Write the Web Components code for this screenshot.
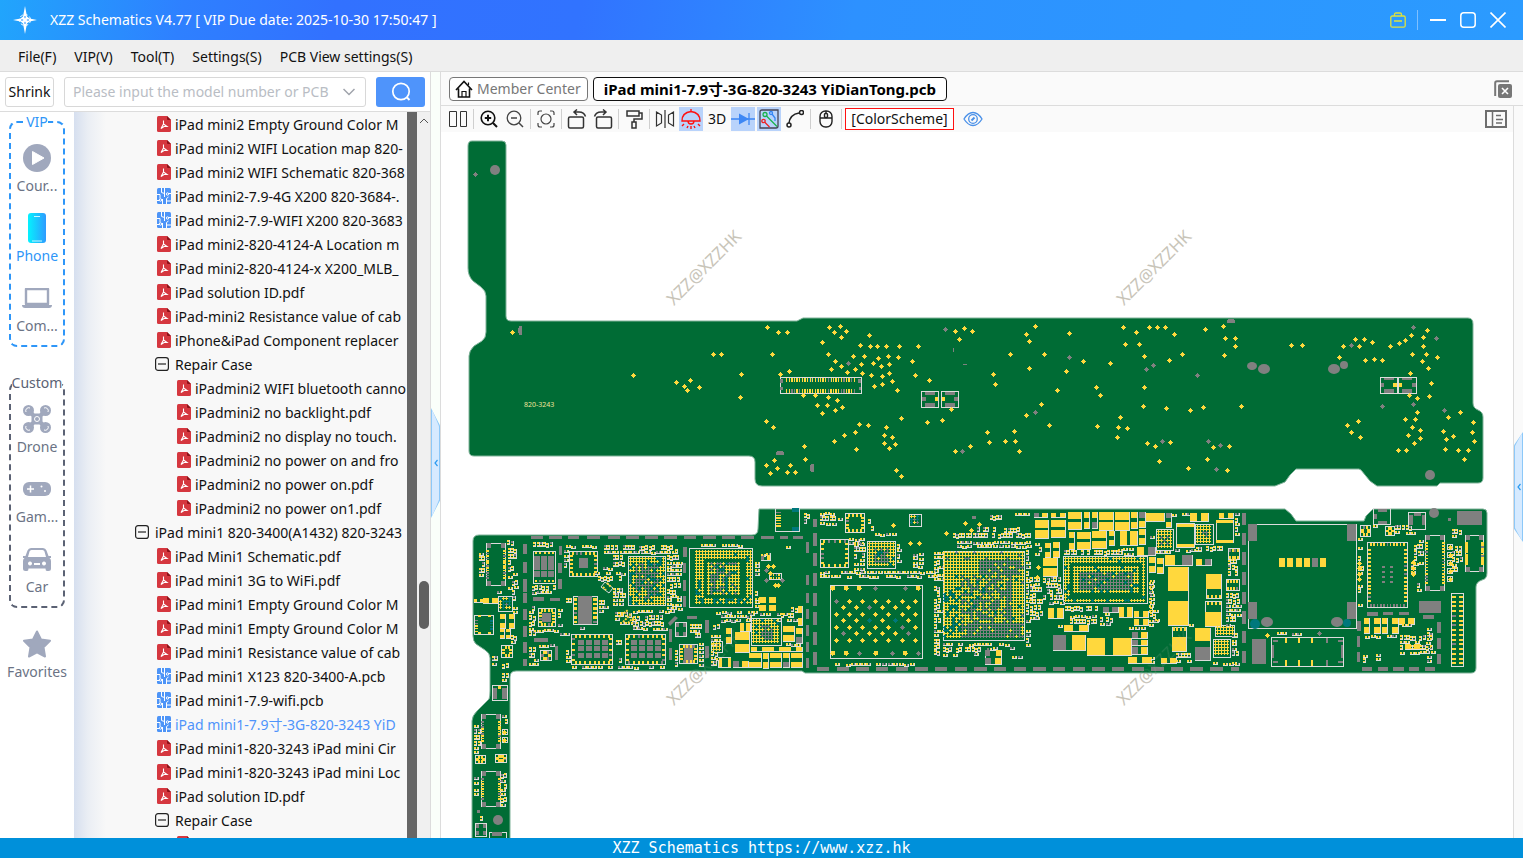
<!DOCTYPE html>
<html lang="en">
<head>
<meta charset="utf-8">
<title>XZZ Schematics</title>
<style>
  html, body { height: 100%; margin: 0; }
  body {
    font: 14px/20px "Noto Sans", "Noto Sans CJK SC", sans-serif;
    color: #111;
    background: #fff;
    overflow: hidden;
  }
</style>
</head>
<body>
<xzz-app></xzz-app>

<script>
const ICONS = {
  logo: ['0 0 24 28', '<path fill="#fff" d="M12 0l2 10.500 2.500 2L24 14l-7.500 1.500-2.500 2L12 28l-2-10.500-2.500-2L0 14l7.500-1.500 2.500-2z"/><circle cx="12" cy="14" r="5.500" fill="none" stroke="#fff" stroke-width="1" stroke-dasharray="3 2"/><path stroke="#2a90fd" d="M8 14h8M12 10v8"/><circle cx="12" cy="14" r="2" fill="#fff"/>'],
  bag: ['0 0 16 16', '<g fill="none" stroke="#dfe23c" stroke-width="1.300"><rect x=".8" y="4" width="14.400" height="11.200" rx="1.500"/><path d="M4.500 4V2.500q0-1.500 1.500-1.500h4q1.500 0 1.500 1.500V4M4 9h8"/></g>'],
  min: ['0 0 16 16', '<path d="M0 8h16" stroke="#fff" stroke-width="2"/>'],
  max: ['0 0 16 16', '<rect x=".8" y=".8" width="14.400" height="14.400" rx="3" fill="none" stroke="#fff" stroke-width="1.500"/>'],
  close: ['0 0 16 16', '<path d="M.5.5l15 15M15.500.5l-15 15" stroke="#fff" stroke-width="1.600"/>'],
  down: ['0 0 12 8', '<path d="M.5 1L6 6.500 11.500 1" fill="none" stroke="#a0a4ac" stroke-width="1.500"/>'],
  search: ['0 0 20 20', '<circle cx="10" cy="9.500" r="8.200" fill="none" stroke="#fff" stroke-width="1.700"/><path d="M15.500 15l3 3" stroke="#fff" stroke-width="2"/>'],
  play: ['0 0 28 28', '<circle cx="14" cy="14" r="14" fill="#a0a8bd"/><path d="M9.500 7.500v13L21 14z" fill="#fff" stroke="#fff" stroke-linejoin="round"/>'],
  phone: ['0 0 18 30', '<defs><linearGradient id="g"><stop stop-color="#05f2fe"/><stop offset="1" stop-color="#2e9bff"/></linearGradient></defs><rect width="18" height="30" rx="3" fill="url(#g)"/><path d="M6 3.500h6M4 28h10" stroke="#c9f8ff" stroke-width="1.200"/>'],
  laptop: ['0 0 30 20', '<path d="M4 1h22v15H4z" fill="none" stroke="#a0a8bd" stroke-width="2.400" stroke-linejoin="round"/><path d="M0 17h30q0 3-3 3H3q-3 0-3-3z" fill="#a0a8bd"/>'],
  drone: ['0 0 28 28', '<g fill="none" stroke="#a0a8bd"><path d="M6 6l16 16M22 6L6 22" stroke-width="4"/><g fill="#a0a8bd" stroke="none"><circle cx="5.500" cy="5.500" r="5.500"/><circle cx="22.500" cy="5.500" r="5.500"/><circle cx="5.500" cy="22.500" r="5.500"/><circle cx="22.500" cy="22.500" r="5.500"/><rect x="8.500" y="8.500" width="11" height="11" rx="4"/></g><g stroke="#fff" stroke-width="1"><path d="M3 7a3 3 0 0 1 4-4M21 3a3 3 0 0 1 4 4M3 21a3 3 0 0 0 4 4M21 25a3 3 0 0 0 4-4"/><circle cx="14" cy="14" r="2.500"/></g></g>'],
  game: ['0 0 28 14', '<rect width="28" height="14" rx="6" fill="#a0a8bd"/><path d="M7.500 3.500v7M4 7h7" stroke="#fff" stroke-width="1.500"/><circle cx="18.500" cy="4.500" r="1" fill="#fff"/><circle cx="22" cy="9" r="1" fill="#fff"/>'],
  car: ['0 0 28 23', '<path fill="#a0a8bd" fill-rule="evenodd" d="M8 0h12q2.500 0 3.500 2.500L25.500 8H28v2h-1.500q1.500 1 1.500 3v7.500q0 2.500-2.500 2.500H24q-1.500 0-1.500-2.500h-17Q5.500 23 4 23H2.500Q0 23 0 20.500V13q0-2 1.500-3H0V8h2.500l2-5.500Q5.500 0 8 0zm.5 2Q7 2 6.500 3.500L5 9h18l-1.500-5.500Q21 2 19.500 2zM7 13.500a2 2 0 1 0 .01 0zm14 0a2 2 0 1 0 .01 0zM11 15v2h6v-2z"/>'],
  star: ['0 0 28 28', '<path d="M14 1.500l4 8 9 1.300-6.500 6.400 1.500 9.300-8-4.200-8 4.200 1.500-9.300L1 10.800l9-1.300z" fill="#a0a8bd" stroke="#a0a8bd" stroke-width="2" stroke-linejoin="round"/>'],
  pdf: ['0 0 14 16', '<path d="M1.500 0H10l4 4v10.500q0 1.500-1.500 1.500h-11Q0 16 0 14.500v-13Q0 0 1.500 0z" fill="#d5373f"/><path d="M10 0l4 4h-3q-1 0-1-1z" fill="#8c1219"/><path d="M6.500 4.500v3.500l3.500 2.500H7L4 12.500 6.500 8" fill="none" stroke="#fff" stroke-width="1.100"/>'],
  pcb: ['0 0 14 16', '<rect width="14" height="16" rx="1.500" fill="#4d94f7"/><g fill="none" stroke="#fff" stroke-width="1"><path d="M4.500 0v4.500l3 1M7.500 0v9M0 6.500h3v4M0 12.500h2M9.500 16v-5.500l2-1.500M5.500 16v-5M11.500 5.500H14M10 13h4"/><circle cx="3.500" cy="12" r="1.200"/><circle cx="10.500" cy="6" r="1.200"/></g>'],
  minus: ['0 0 14 14', '<rect x=".6" y=".6" width="12.800" height="12.800" rx="2.500" fill="none" stroke="#222" stroke-width="1.200"/><path d="M3 7h8" stroke="#222" stroke-width="1.200"/>'],
  home: ['0 0 18 18', '<g fill="none" stroke="#111" stroke-width="1.600"><path d="M1 10l8-8.500 8 8.500M3.500 8.500V17h11V8.500"/><path d="M7 17v-5.500h4V17M13.500 5V2.500" stroke-width="1.200"/></g>'],
  closeall: ['0 0 18 18', '<path d="M1.200 16V3q0-1.800 1.800-1.800h12" fill="none" stroke="#777" stroke-width="2"/><rect x="4" y="4" width="14" height="14" rx="2" fill="#777"/><path d="M8 8l6 6M14 8l-6 6" stroke="#fff" stroke-width="1.600"/>'],
  panel: ['0 0 22 18', '<g fill="none" stroke="#6e6e6e"><rect x="1" y="1" width="20" height="16" stroke-width="2"/><path d="M7.500 1v16" stroke-width="1.500"/><path d="M11 5.500h5M11 9.500h7M11 13h6" stroke-width="1.300"/></g>'],
  split: ['0 0 20 18', '<path d="M1.500 1.500h7v15h-7zM12.500 1.500h6v15h-6z" fill="none" stroke="#333"/>'],
  zoomin: ['0 0 18 18', '<circle cx="8" cy="8" r="6.800" fill="none" stroke="#111" stroke-width="1.600"/><path d="M13 13l4 4M8 4.800v6.400M4.800 8h6.400" stroke="#111" stroke-width="2"/>'],
  zoomout: ['0 0 18 18', '<circle cx="8" cy="8" r="6.800" fill="none" stroke="#444" stroke-width="1.300"/><path d="M13 13l4 4M5 8h6" stroke="#444" stroke-width="1.500"/>'],
  fit: ['0 0 18 18', '<g fill="none" stroke="#444" stroke-width="1.200"><path d="M1 5V3q0-2 2-2h2M13 1h2q2 0 2 2v2M17 13v2q0 2-2 2h-2M5 17H3q-2 0-2-2v-2"/><circle cx="9" cy="9" r="5"/></g>'],
  rotl: ['0 0 20 20', '<g fill="none" stroke="#333" stroke-width="1.500"><rect x="1.500" y="8" width="15" height="11" rx="1.500"/><path d="M7 3h5q5 0 6.500 4.500M10 .5L7 3l3 3"/></g>'],
  rotr: ['0 0 20 20', '<g fill="none" stroke="#333" stroke-width="1.500"><rect x="3.500" y="8" width="15" height="11" rx="1.500"/><path d="M13 3H8Q3 3 1.500 7.500M10 .5L13 3l-3 3"/></g>'],
  roller: ['0 0 18 20', '<g fill="none" stroke="#333" stroke-width="1.500"><path d="M2 2h12v5H2zM14 4h3v6H9v3M7 13h4v6H7z"/></g>'],
  mirror: ['0 0 20 18', '<path d="M1.500 2l5 3v8l-5 3zM18.500 2l-5 3v8l5 3zM10 0v18" fill="none" stroke="#333" stroke-width="1.200"/>'],
  lamp: ['0 0 20 20', '<g fill="none" stroke="#f11" stroke-width="1.400"><path d="M1 12q0-8.500 9-9.500 9 1 9 9.500zM7 12q0 3 3 3t3-3M10 0v3M3 15l-2 2M7 17l-1 2M13 17l1 2M17 15l2 2M10 17v3"/></g>'],
  diode: ['0 0 24 18', '<path d="M0 9h24M18 3v12" stroke="#3d87f5" stroke-width="1.300"/><path d="M8 3.500v11L18 9z" fill="#3d87f5"/>'],
  probe: ['0 0 20 20', '<g fill="none" stroke-width="1.300"><path d="M1 3q0-2 2-2h16v16q0 2-2 2H1z" stroke="#445"/><path d="M7.500 7L18 17.500" stroke="#19b34a"/><circle cx="6" cy="5.500" r="2" stroke="#19b34a"/><path d="M5.500 13l5 5" stroke="#e22"/><circle cx="4.500" cy="12" r="1.700" stroke="#e22"/><path d="M13 5l3 4v3" stroke="#3486f5"/><circle cx="12" cy="4" r="1.500" stroke="#3486f5"/></g>'],
  curve: ['0 0 18 18', '<g fill="none" stroke="#222" stroke-width="1.500"><path d="M3 13q1-8.500 10-10"/><circle cx="3" cy="15" r="2"/><circle cx="15.500" cy="2.500" r="2"/></g>'],
  mouse: ['0 0 14 18', '<g fill="none" stroke="#222" stroke-width="1.400"><rect x="1" y="1" width="12" height="16" rx="5.500"/><path d="M1 8h12M7 1v3"/><rect x="5.500" y="3.500" width="3" height="4" rx="1"/></g>'],
  eye: ['0 0 20 16', '<g fill="none" stroke="#4a90e8" stroke-width="1.300"><path d="M1 8q4-6.500 9-6.500T19 8q-4 6.500-9 6.500T1 8z"/><circle cx="10" cy="8" r="4.300"/><path d="M8.500 9.500l3-3" stroke-width="2"/></g>'],
  left: ['0 0 4 8', '<path d="M3.500 1L1 4l2.500 3" fill="none" stroke="#2d9bf0" stroke-width="1.200"/>'],
};

class AppIcon extends HTMLElement {
  constructor() {
    super();
    this.attachShadow({ mode: 'open' });
  }

  connectedCallback() {
    const [box, body] = ICONS[this.getAttribute('name')];
    const [, , w, h] = box.split(' ');
    this.shadowRoot.innerHTML = `
      <style>:host { display: inline-flex; flex: none; } svg { display: block; }</style>
      <svg viewBox="${box}" width="${w}" height="${h}" aria-hidden="true">${body}</svg>
    `;
  }
}
customElements.define('app-icon', AppIcon);

// Registers an element whose shadow root is only styles and markup.
function component(name, css, html) {
  customElements.define(name, class extends HTMLElement {
    constructor() {
      super();
      this.attachShadow({ mode: 'open' }).innerHTML = `
        <style>
          * { box-sizing: border-box; }
          button, input { font: inherit; color: inherit; margin: 0; }
          button { background: none; border: 0; padding: 0; }
          ${css}
        </style>
        ${html}
      `;
    }
  });
}

component('title-bar', `
  :host {
    display: flex; align-items: center; height: 40px; padding: 0 17px 0 13px;
    box-sizing: border-box; color: #fff;
    background: linear-gradient(100deg, #21a5fc 0, #2e80ff 12%, #3271ff 22%, #3173ff 38%, #2d91ff 56%, #2b9bff 100%);
  }
  h1 { font: inherit; margin: 0 auto 0 13px; }
  .buttons { display: flex; align-items: center; gap: 14px; }
  button { display: flex; }
  i { width: 1px; height: 20px; background: #7fc0ff; margin: 0 -2px 0 -3px; }
`, `
  <app-icon name="logo"></app-icon>
  <h1>XZZ Schematics V4.77 [ VIP Due date: 2025-10-30 17:50:47 ]</h1>
  <div class="buttons">
    <button aria-label="Toolbox"><app-icon name="bag"></app-icon></button>
    <i></i>
    <button aria-label="Minimize"><app-icon name="min"></app-icon></button>
    <button aria-label="Maximize"><app-icon name="max"></app-icon></button>
    <button aria-label="Close"><app-icon name="close"></app-icon></button>
  </div>
`);

component('menu-bar', `
  :host {
    display: flex; align-items: center; gap: 18px; height: 32px; padding: 2px 18px 0;
    box-sizing: border-box; background: #efefef; border-bottom: 1px solid #dcdcdc;
  }
`, `
  <button>File(F)</button>
  <button>VIP(V)</button>
  <button>Tool(T)</button>
  <button>Settings(S)</button>
  <button>PCB View settings(S)</button>
`);

component('search-bar', `
  :host {
    display: flex; align-items: center; height: 40px; padding: 0 5px;
    box-sizing: border-box; border-bottom: 1px solid #dcdcdc; background: #fff;
  }
  .shrink { height: 30px; width: 49px; border: 1px solid #d8d8d8; border-radius: 3px; white-space: nowrap; }
  label { display: flex; align-items: center; flex: 1; min-width: 0; height: 30px; margin: 0 10px; padding: 0 10px 0 8px; border: 1px solid #d8d8d8; border-radius: 3px; }
  input { flex: 1; min-width: 0; border: 0; outline: 0; padding: 0; margin-right: 6px; background: none; }
  input::placeholder { color: #b9bdc4; }
  .go { display: flex; align-items: center; justify-content: center; width: 49px; height: 30px; border-radius: 3px; background: #4f94fb; }
`, `
  <button class="shrink">Shrink</button>
  <label><input aria-label="Model number" placeholder="Please input the model number or PCB"><app-icon name="down"></app-icon></label>
  <button class="go" aria-label="Search"><app-icon name="search"></app-icon></button>
`);

component('nav-group', `
  :host { display: block; margin: 0 9px 26px; color: #5b6274; }
  :host([active]) { color: #2e96f8; }
  fieldset { margin: 0; padding: 0; min-width: 0; border: 2px dashed currentColor; border-radius: 8px; }
  legend { margin: 0 auto; padding: 0; height: 20px; }
  div { display: grid; gap: 15px; margin: 9px 0; }
`, '<fieldset><legend><slot name="title"></slot></legend><div><slot></slot></div></fieldset>');

component('nav-item', `
  :host { display: block; color: #6b7385; }
  :host([active]) { color: #2e96f8; }
  button { display: flex; flex-direction: column; align-items: center; width: 100%; height: 55px; }
  .icon { display: flex; align-items: center; height: 34px; margin-bottom: 1px; }
`, '<button><span class="icon"><slot name="icon"></slot></span><slot></slot></button>');

component('nav-rail', `
  :host { display: flex; flex-direction: column; width: 74px; flex: none; background: #fff; overflow: hidden; }
  nav-group + nav-group { margin-bottom: 19px; }
`, `
  <nav-group active><span slot="title">VIP</span>
    <nav-item><app-icon slot="icon" name="play"></app-icon>Cour...</nav-item>
    <nav-item active><app-icon slot="icon" name="phone"></app-icon>Phone</nav-item>
    <nav-item><app-icon slot="icon" name="laptop"></app-icon>Com...</nav-item>
  </nav-group>
  <nav-group><span slot="title">Custom</span>
    <nav-item><app-icon slot="icon" name="drone"></app-icon>Drone</nav-item>
    <nav-item><app-icon slot="icon" name="game"></app-icon>Gam...</nav-item>
    <nav-item><app-icon slot="icon" name="car"></app-icon>Car</nav-item>
  </nav-group>
  <nav-item><app-icon slot="icon" name="star"></app-icon>Favorites</nav-item>
`);

// [depth, icon, name, active]
const FILES = [
  [1, 'pdf', 'iPad mini2 Empty Ground Color M'],
  [1, 'pdf', 'iPad mini2 WIFI Location map 820-'],
  [1, 'pdf', 'iPad mini2 WIFI Schematic 820-368'],
  [1, 'pcb', 'iPad mini2-7.9-4G X200 820-3684-.'],
  [1, 'pcb', 'iPad mini2-7.9-WIFI X200 820-3683'],
  [1, 'pdf', 'iPad mini2-820-4124-A Location m'],
  [1, 'pdf', 'iPad mini2-820-4124-x X200_MLB_'],
  [1, 'pdf', 'iPad solution ID.pdf'],
  [1, 'pdf', 'iPad-mini2 Resistance value of cab'],
  [1, 'pdf', 'iPhone&iPad Component replacer'],
  [1, 'minus', 'Repair Case'],
  [2, 'pdf', 'iPadmini2 WIFI bluetooth canno'],
  [2, 'pdf', 'iPadmini2 no backlight.pdf'],
  [2, 'pdf', 'iPadmini2 no display no touch.'],
  [2, 'pdf', 'iPadmini2 no power on and fro'],
  [2, 'pdf', 'iPadmini2 no power on.pdf'],
  [2, 'pdf', 'iPadmini2 no power on1.pdf'],
  [0, 'minus', 'iPad mini1 820-3400(A1432) 820-3243'],
  [1, 'pdf', 'iPad Mini1 Schematic.pdf'],
  [1, 'pdf', 'iPad mini1 3G to WiFi.pdf'],
  [1, 'pdf', 'iPad mini1 Empty Ground Color M'],
  [1, 'pdf', 'iPad mini1 Empty Ground Color M'],
  [1, 'pdf', 'iPad mini1 Resistance value of cab'],
  [1, 'pcb', 'iPad mini1 X123 820-3400-A.pcb'],
  [1, 'pcb', 'iPad mini1-7.9-wifi.pcb'],
  [1, 'pcb', 'iPad mini1-7.9寸-3G-820-3243 YiD', true],
  [1, 'pdf', 'iPad mini1-820-3243 iPad mini Cir'],
  [1, 'pdf', 'iPad mini1-820-3243 iPad mini Loc'],
  [1, 'pdf', 'iPad solution ID.pdf'],
  [1, 'minus', 'Repair Case'],
  [2, 'pdf', ''],
];

component('file-tree', `
  :host { display: flex; flex: 1; min-width: 0; background: linear-gradient(90deg, #d6dfef 0, #eaeef4 14px, #f8f8f8 32px); }
  ul { flex: 1; min-width: 0; margin: 0; padding: 0 0 0 61px; list-style: none; overflow: hidden; }
  li { display: grid; grid-template-columns: 16px 1fr; gap: 4px; align-items: center; height: 24px; margin-left: calc(20px * var(--depth)); white-space: nowrap; }
  li app-icon { justify-self: end; }
  li app-icon[name=minus] { justify-self: start; }
  li span { overflow: hidden; padding-top: 1px; }
  .active { color: #4f94fb; }
  .bar { width: 10px; background: #666; margin-left: 1px; }
  .scroll { width: 13px; background: #f0f0f0; display: flex; flex-direction: column; align-items: center; }
  .scroll svg { margin: 5px 0 456px; }
  .thumb { width: 10px; height: 48px; border-radius: 5px; background: #606060; }
`, `
  <ul>${FILES.map(([depth, icon, name, active]) => `
    <li style="--depth:${depth}"${active ? ' class="active"' : ''}><app-icon name="${icon}"></app-icon><span>${name.replace('&', '&amp;')}</span></li>`).join('')}
  </ul>
  <div class="bar"></div>
  <div class="scroll">
    <svg width="10" height="8"><path d="M1 6l4-4 4 4" fill="none" stroke="#555"/></svg>
    <div class="thumb"></div>
  </div>
`);

component('tab-bar', `
  :host { display: flex; align-items: center; gap: 5px; height: 34px; padding: 0 11px 0 8px; box-sizing: border-box; border-bottom: 1px solid #dcdcdc; background: #fafafa; }
  button { display: flex; align-items: center; gap: 4px; height: 24px; padding: 0 6px 0 5px; border: 1px solid #777; border-radius: 4px; color: #777; background: #fff; white-space: nowrap; }
  .active { padding: 0 10px; border-color: #111; color: #000; font-size: 15px; font-weight: 700; }
  .all { margin-left: auto; border: 0; padding: 0; background: none; }
`, `
  <button><app-icon name="home"></app-icon>Member Center</button>
  <button class="active">iPad mini1-7.9寸-3G-820-3243 YiDianTong.pcb</button>
  <button class="all" aria-label="Close all"><app-icon name="closeall"></app-icon></button>
`);

const tool = (name, on) => `<button aria-label="${name}"${on ? ' class="on"' : ''}><app-icon name="${name}"></app-icon></button>`;

component('tool-bar', `
  :host { display: flex; align-items: center; gap: 2px; height: 26px; padding: 0 5px; box-sizing: border-box; background: #fafafa; }
  button { display: flex; align-items: center; justify-content: center; width: 24px; height: 24px; }
  .on { background: #b9d3fb; }
  i { width: 1px; height: 20px; margin: 0 1px; background: #cfcfcf; }
  .scheme { width: 109px; height: 22px; margin-right: 5px; border: 1px solid #f11; background: #fff; }
  .panel { margin-left: auto; }
`, `
  ${tool('split')}<i></i>${tool('zoomin')}${tool('zoomout')}<i></i>${tool('fit')}<i></i>
  ${tool('rotl')}${tool('rotr')}<i></i>${tool('roller')}<i></i>${tool('mirror')}${tool('lamp', true)}
  <button>3D</button>${tool('diode', true)}${tool('probe', true)}${tool('curve')}<i></i>
  ${tool('mouse')}<i></i><button class="scheme">[ColorScheme]</button>${tool('eye')}
  <button class="panel" aria-label="Panel"><app-icon name="panel"></app-icon></button>
`);

component('side-handle', `
  :host { display: flex; flex: none; flex-direction: column; width: 10px; box-sizing: border-box; background: #fafffa; border: solid #dcdcdc; border-width: 0 1px; }
  button { display: flex; align-items: center; justify-content: center; height: 110px; background: #8cc8f8; clip-path: polygon(0 0, 100% 16%, 100% 84%, 0 100%); position: relative; }
  button::before { content: ""; position: absolute; inset: 1px; background: #d6eaff; clip-path: inherit; }
  app-icon { position: relative; }
  :host([right]) button { clip-path: polygon(100% 0, 0 12%, 0 88%, 100% 100%); }
`, '<button aria-label="Toggle panel"><app-icon name="left"></app-icon></button>');

component('status-bar', `
  :host { display: block; height: 20px; background: #0090da; color: #fff; text-align: center; font: 15px/20px "DejaVu Sans Mono", monospace; }
`, 'XZZ Schematics https://www.xzz.hk');

const GREEN = '#006c35';
const OUTLINE = '#dcdcdc';
const GRAY = '#808080';
const GOLD = '#ffd83d';
const TEAL = '#00787c';

// Collects rectangles by layer and colour. Part coordinates are thirds of a
// pixel from the origin of a tile, snapped to whole pixels.
class Board {
  constructor() {
    this.layers = [OUTLINE, GREEN, GRAY, GOLD, TEAL].map((color) => ({ color, d: '' }));
    this.seed = 7;
    this.tile(0, 0);
  }

  tile(x, y) {
    this.ox = x;
    this.oy = y;
  }

  random() {
    this.seed = (this.seed * 16807) % 2147483647;
    return this.seed / 2147483647;
  }

  px(x, y, w, h, color) {
    if (w > 0 && h > 0) {
      this.layers.find((l) => l.color === color).d += `M${x} ${y}h${w}v${h}h${-w}z`;
    }
  }

  snap(x, y, w, h) {
    const x1 = this.ox + Math.round(x / 3);
    const y1 = this.oy + Math.round(y / 3);
    return [x1, y1, Math.max(1, this.ox + Math.round((x + w) / 3) - x1), Math.max(1, this.oy + Math.round((y + h) / 3) - y1)];
  }

  rect(x, y, w, h, color = GRAY) {
    this.px(...this.snap(x, y, w, h), color);
  }

  rects(list, color) {
    list.forEach((r) => this.rect(...r, color));
  }

  box(x, y, w, h) {
    const [a, b, c, d] = this.snap(x, y, w, h);
    this.px(a, b, c, 1, OUTLINE);
    this.px(a, b + d - 1, c, 1, OUTLINE);
    this.px(a, b + 1, 1, d - 2, OUTLINE);
    this.px(a + c - 1, b + 1, 1, d - 2, OUTLINE);
  }

  // Two-pad part; upright when it is taller than wide.
  cap(x, y, w, h, first = GOLD, second = GOLD) {
    const [a, b, c, d] = this.snap(x, y, w, h);
    const tall = d > c;
    const pad = Math.max(1, Math.round((tall ? d : c) * (c > 12 && d > 12 ? 0.42 : 0.37)));
    this.px(a, b + d, c + 1, 1, OUTLINE);
    this.px(a + c, b, 1, d + 1, OUTLINE);
    this.px(a, b, tall ? c : pad, tall ? pad : d, first);
    this.px(tall ? a : a + c - pad, tall ? b + d - pad : b, tall ? c : pad, tall ? pad : d, second);
  }

  caps(list) {
    list.forEach((c) => this.cap(...c));
  }

  // Fills a region with small passives.
  scatter(x, y, w, h, fill = 0.85) {
    const [a, b, c, d] = this.snap(x, y, w, h);
    const color = () => (this.random() < 0.78 ? GOLD : GRAY);
    let j = 0;
    while (j < d - 2) {
      let i = 0;
      const step = d - j >= 6 && this.random() < 0.5 ? 6 : 4;
      while (i < c - 2) {
        const tall = step === 6;
        const pw = tall ? 3 : 5;
        if (this.random() < fill) {
          const px = a + i;
          const py = b + j + (this.random() < 0.3 ? 1 : 0);
          if (tall) {
            this.px(px, py, 3, 5, OUTLINE);
            this.px(px, py + 2, 2, 1, GREEN);
            this.px(px, py, 2, 2, color());
            this.px(px, py + 3, 2, 1, color());
          } else {
            this.px(px, py, 5, 3, OUTLINE);
            this.px(px + 2, py, 1, 2, GREEN);
            this.px(px, py, 2, 2, color());
            this.px(px + 3, py, 1, 2, color());
          }
        }
        i += pw + (this.random() < 0.3 ? 1 : 0);
      }
      j += step;
    }
  }

  scatters(list) {
    list.forEach((s) => this.scatter(...s));
  }

  // Ball grid; pick(u, v) gives the colour at a relative place, or nothing.
  grid(x, y, w, h, pick) {
    const [a, b, c, d] = this.snap(x, y, w, h);
    for (let j = 1; j < d - 1; j += 3) {
      for (let i = 1; i < c - 1; i += 3) {
        const color = pick(i / c, j / d);
        if (color) {
          this.px(a + i - 1, b + j, 3, 1, color);
          this.px(a + i, b + j - 1, 1, 3, color);
        }
      }
    }
  }

  bga(x, y, w, h, gray = 0.4, teal = 0.08) {
    this.grid(x, y, w, h, (u, v) => {
      const r = this.random();
      const inside = Math.abs(u - 0.5) < gray / 2 && Math.abs(v - 0.5) < gray / 2;
      if (r < teal) return TEAL;
      return inside && r < 0.7 ? GRAY : GOLD;
    });
    this.box(x - 3, y - 3, w + 6, h + 6);
  }

  // Row (horizontal) or column of pins.
  pins(x, y, length, n, w, h, vertical, color = GOLD) {
    for (let i = 0; i < n; i++) {
      const at = (i * (length - (vertical ? h : w))) / Math.max(1, n - 1);
      const c = color === GOLD && this.random() < 0.15 ? GRAY : color;
      this.rect(x + (vertical ? 0 : at), y + (vertical ? at : 0), w, h, c);
    }
  }

  // Chip with pins inside its four edges.
  quad(x, y, w, h, nx, ny) {
    this.box(x, y, w, h);
    this.pins(x + 10, y + 3, w - 20, nx, 6, 9);
    this.pins(x + 10, y + h - 12, w - 20, nx, 6, 9);
    this.pins(x + 3, y + 12, h - 24, ny, 9, 6, true);
    this.pins(x + w - 12, y + 12, h - 24, ny, 9, 6, true);
  }

  conn(x, y, w, h, n) {
    this.box(x, y, w, h);
    this.rects([[x + 3, y, 12, 14], [x + w - 15, y, 12, 14], [x + 3, y + h - 15, 12, 15], [x + w - 15, y + h - 15, 12, 15]], GRAY);
    this.pins(x + 1, y + 22, h - 44, n, 9, 5, true);
    this.pins(x + w - 10, y + 22, h - 44, n, 9, 5, true);
  }

  pads(x, y, cols, rows, w, h, dx, dy) {
    for (let j = 0; j < rows; j++) {
      for (let i = 0; i < cols; i++) this.rect(x + i * dx, y + j * dy, w, h, GRAY);
    }
  }

  via(x, y, color = GOLD) {
    const [a, b] = this.snap(x, y, 3, 3);
    this.px(a - 2, b, 5, 1, color);
    this.px(a - 1, b - 1, 3, 3, color);
    this.px(a, b - 2, 1, 5, color);
  }

  vias(text, color) {
    text.trim().split(/\s+/).forEach((p) => this.via(...p.split(',').map((n) => n - 1), color));
  }

  render() {
    return this.layers.map((l) => `<path fill="${l.color}" d="${l.d}"/>`).join('');
  }
}

function drawParts() {
  const b = new Board();

  // front side, left end
  b.tile(460, 500);
  [[213, 37], [268, 38], [324, 33], [382, 39], [444, 36], [499, 38], [556, 38], [613, 37], [672, 37], [729, 39], [786, 39], [843, 39], [903, 39], [960, 23], [998, 31]]
    .forEach(([x, w]) => b.rect(x, 108, w, 9));
  [[132, 30], [187, 32], [237, 38], [279, 29], [326, 33], [378, 34], [427, 31], [476, 21]].forEach(([y, h]) => b.rect(189, y, 11, h));
  [[127, 31], [225, 30], [279, 29], [328, 29], [376, 31], [427, 29], [474, 29]].forEach(([y, h]) => b.rect(1037, y, 10, h));
  [[100, 37], [160, 37], [220, 38], [279, 38], [336, 39], [398, 36], [456, 36]].forEach(([y, h]) => b.rect(1060, y, 10, h));
  b.rects([[1060, 57, 11, 24], [297, 138, 9, 28], [294, 189, 12, 30], [294, 237, 12, 30], [219, 291, 33, 12], [270, 294, 30, 9], [222, 414, 42, 12], [285, 438, 9, 42],
    [669, 141, 12, 30], [669, 189, 9, 30], [669, 240, 9, 33], [669, 288, 9, 33], [681, 348, 30, 9], [735, 360, 12, 39], [735, 438, 12, 36], [627, 387, 9, 39], [627, 444, 9, 36]], GRAY);
  b.box(945, 24, 75, 72);
  b.pins(948, 36, 44, 6, 15, 4, true);
  b.rects([[996, 24, 21, 12], [996, 81, 21, 12]], TEAL);
  b.scatters([[1032, 40, 18, 40], [978, 138, 33, 14], [141, 120, 36, 24], [144, 144, 33, 150, 0.8], [57, 156, 21, 80], [219, 126, 70, 20], [216, 255, 72, 30], [96, 273, 36, 16],
    [318, 135, 96, 10], [312, 150, 15, 60, 0.7], [432, 135, 215, 26, 0.9], [645, 135, 18, 30], [459, 165, 36, 55], [429, 200, 36, 15], [405, 216, 90, 30, 0.7], [459, 260, 40, 60],
    [620, 165, 42, 170, 0.95], [519, 330, 130, 15], [519, 345, 100, 45, 0.9], [417, 300, 36, 55, 0.7], [465, 336, 60, 40, 0.8], [705, 132, 145, 13], [885, 147, 18, 185, 0.7], [903, 147, 30, 30, 0.6],
    [870, 339, 110, 12], [753, 333, 140, 12], [950, 320, 80, 50, 0.7], [208, 315, 20, 95], [222, 387, 75, 15], [300, 399, 33, 18], [294, 325, 15, 60], [319, 291, 18, 20],
    [207, 441, 27, 60], [237, 432, 42, 12], [318, 450, 15, 45], [345, 382, 30, 14], [318, 497, 330, 9, 0.7], [468, 420, 18, 18], [468, 475, 18, 20], [645, 450, 15, 55], [718, 430, 15, 70],
    [690, 372, 36, 30], [705, 400, 18, 18], [760, 372, 24, 24], [784, 345, 90, 25], [754, 405, 22, 100, 0.8], [978, 430, 50, 15], [153, 405, 24, 27], [96, 450, 20, 45, 0.7], [126, 488, 20, 60], [160, 288, 12, 50]]);
  b.conn(78, 129, 60, 129, 12);
  b.box(219, 153, 69, 99);
  b.pads(222, 168, 3, 3, 18, 20, 21, 22);
  b.pins(225, 156, 57, 5, 6, 6);
  b.pins(225, 240, 57, 5, 6, 6);
  b.quad(327, 153, 87, 78, 6, 5);
  b.rect(357, 174, 27, 30);
  b.box(339, 288, 75, 87);
  b.rect(354, 288, 42, 84);
  b.pins(342, 294, 76, 6, 9, 8, true);
  b.pins(399, 294, 76, 6, 12, 8, true);
  b.quad(234, 324, 54, 57, 4, 4);
  b.rect(246, 339, 27, 27);
  b.quad(334, 402, 126, 93, 8, 5);
  b.pads(354, 420, 4, 3, 18, 15, 24, 19);
  b.quad(495, 402, 124, 93, 8, 5);
  b.pads(513, 420, 4, 3, 18, 15, 24, 19);
  b.quad(240, 450, 36, 33, 3, 2);
  b.bga(507, 171, 108, 144, 0.72, 0.22);
  b.grid(705, 150, 170, 168, (u, v) => {
    const r = b.random();
    const edge = Math.min(u, 1 - u, v, 1 - v);
    if (edge > 0.14 && edge < 0.2) return undefined;
    if (r < 0.07 || (v > 0.82 && r < 0.45) || (u < 0.12 && v > 0.5 && r < 0.6)) return TEAL;
    if (u > 0.25 && u < 0.75 && v > 0.2 && v < 0.8 && r < 0.5) return GRAY;
    return GOLD;
  });
  b.box(687, 145, 192, 178);
  b.bga(876, 357, 87, 78, 0.5, 0.08);
  b.bga(117, 291, 39, 42, 0.3, 0.6);
  b.bga(757, 425, 30, 30, 0.1, 0);
  b.box(42, 345, 60, 60);
  b.pins(45, 360, 36, 5, 8, 4, true);
  b.pins(90, 360, 30, 4, 8, 5, true, TEAL);
  b.rects([[54, 345, 9, 6], [84, 345, 9, 6], [54, 396, 9, 6], [84, 396, 9, 6], [897, 291, 21, 18], [927, 291, 21, 18], [897, 315, 21, 18], [927, 315, 21, 18]], GOLD);
  b.caps([[42, 297, 27, 9], [69, 294, 45, 15], [120, 342, 15, 42], [147, 342, 14, 42], [120, 387, 12, 27], [138, 387, 12, 27], [825, 396, 42, 60], [969, 378, 33, 45], [867, 459, 36, 42], [909, 459, 15, 45],
    [930, 459, 33, 42], [969, 459, 18, 42, GOLD, GRAY], [993, 459, 33, 42], [819, 483, 45, 18, GRAY, GOLD], [1008, 384, 18, 45, GOLD, GRAY], [798, 384, 15, 45], [840, 369, 30, 24], [903, 165, 27, 15, GRAY, GOLD],
    [1014, 318, 12, 57], [873, 441, 50, 12], [924, 441, 50, 12], [975, 441, 50, 12]]);
  b.box(774, 471, 40, 33);
  b.rects([[777, 474, 8, 27], [804, 474, 8, 27]], GOLD);
  b.quad(658, 432, 57, 60, 4, 4);
  b.rect(672, 435, 28, 54);
  b.box(645, 366, 36, 45);
  b.pads(648, 369, 2, 2, 9, 12, 20, 26);
  b.quad(124, 436, 36, 39, 2, 2);
  b.box(96, 555, 48, 48);
  b.rects([[99, 564, 12, 33], [126, 564, 15, 33]], GRAY);
  b.rect(114, 558, 9, 9, GOLD);
  b.box(927, 219, 38, 21);
  b.pins(930, 221, 30, 4, 5, 6);
  b.pins(930, 231, 30, 4, 5, 6);
  b.vias('925,199 941,199 947,257 956,257 930,220');
  b.vias('919,211 919,241 967,241', GRAY);

  // front side, middle
  b.tile(810, 500);
  for (let i = 0; i < 17; i++) b.rect(21 + i * 59, 502, 37, 11);
  [57, 99, 158, 219, 279, 336, 396, 456].forEach((y, i) => b.rect(9, y, 11, i ? 38 : 24));
  b.scatters([[30, 36, 50, 42], [84, 54, 14, 24], [165, 45, 30, 75, 0.5], [195, 100, 70, 18], [117, 114, 55, 20], [132, 130, 40, 85, 0.8], [262, 130, 14, 60], [30, 213, 350, 28, 0.9],
    [310, 160, 33, 45, 0.8], [340, 63, 15, 20], [540, 45, 50, 22], [615, 39, 42, 14], [430, 100, 235, 24, 0.9], [440, 122, 230, 24, 0.95], [500, 80, 130, 22, 0.9], [372, 155, 25, 320, 0.9],
    [648, 150, 16, 290, 0.9], [660, 230, 40, 140, 0.85], [700, 230, 60, 85, 0.8], [675, 130, 24, 40, 0.6], [400, 430, 115, 40, 0.8], [515, 430, 130, 22, 0.7], [75, 490, 240, 9, 0.6], [762, 150, 170, 18, 0.85],
    [765, 318, 115, 22], [780, 345, 90, 35, 0.8], [870, 340, 50, 45, 0.6], [1018, 245, 15, 75], [925, 145, 50, 24], [745, 375, 18, 12], [605, 467, 30, 10], [958, 380, 60, 12], [1017, 330, 25, 50, 0.6]]);
  b.quad(105, 39, 60, 60, 4, 4);
  b.quad(30, 117, 87, 87, 5, 5);
  b.bga(174, 127, 81, 78, 0.5, 0.05);
  b.bga(300, 45, 33, 33, 0.3, 0.4);
  b.box(60, 255, 279, 222);
  b.vias(`68,265 109,265 148,265 325,265 118,304 157,304 196,304 235,304 277,304 316,304 100,322 139,322 217,322 256,322 295,322
    79,343 118,343 157,343 196,343 235,343 277,343 316,343 100,361 139,361 217,361 295,361 79,382 118,382 157,382 196,382 235,382 316,382
    139,400 178,400 217,400 256,400 79,421 118,421 157,421 196,421 235,421 277,421 316,421 68,460 109,460 197,460 286,460`);
  b.vias('197,265 286,265 79,304 178,322 277,382 100,400 295,400 148,460 247,460 325,460', GRAY);
  b.vias('178,361 256,361', TEAL);
  [[68, 265], [109, 265], [148, 265], [325, 265], [68, 460], [109, 460], [197, 460], [286, 460]].forEach(([x, y]) => b.rect(x - 6, y - 6, 12, 12, GOLD));
  b.grid(399, 154, 246, 267, (u, v) => {
    const r = b.random();
    if (u < 0.2 && v > 0.4 && r < 0.25) return TEAL;
    if (v < 0.1 || u > 0.94) return r < 0.12 ? GRAY : GOLD;
    if ((u > 0.45 && v < 0.26) || (v > 0.8 && u > 0.3) || (u > 0.75 && u < 0.85)) return r < 0.9 ? GRAY : GOLD;
    if (u > 0.2 && u < 0.75 && v > 0.25 && r < 0.5) return GRAY;
    return r > 0.95 ? TEAL : GOLD;
  });
  b.box(399, 152, 247, 271);
  b.grid(762, 172, 250, 138, (u, v) => {
    const r = b.random();
    const edge = Math.min(u * 1.8, (1 - u) * 1.8, v, 1 - v);
    if (edge > 0.12 && edge < 0.2) return undefined;
    if (r < 0.1) return TEAL;
    if (edge > 0.3 && r < 0.92) return GRAY;
    return GOLD;
  });
  b.box(759, 169, 256, 144);
  b.caps([[672, 40, 40, 12, GRAY, GOLD], [722, 40, 42, 12, GOLD, GOLD], [675, 60, 40, 54], [723, 60, 42, 50], [774, 36, 40, 51], [822, 36, 15, 48], [846, 36, 15, 48, GOLD, GRAY], [867, 36, 42, 54],
    [915, 36, 42, 54], [963, 36, 18, 48], [987, 36, 18, 45, GRAY, GOLD], [1008, 39, 42, 24], [777, 96, 15, 50], [801, 96, 38, 52], [846, 94, 42, 50], [897, 94, 15, 42], [930, 94, 50, 42], [987, 87, 18, 46],
    [705, 130, 15, 42], [729, 127, 18, 45], [699, 175, 42, 54], [714, 324, 45, 30], [981, 142, 54, 24, GOLD, GRAY], [1018, 172, 18, 45], [729, 406, 97, 45, GRAY, GOLD], [831, 415, 132, 51],
    [966, 396, 45, 18, GRAY, GOLD], [966, 420, 45, 16, GRAY, GOLD], [966, 441, 45, 22, GRAY, GOLD], [954, 472, 69, 18], [880, 320, 44, 16, GRAY, GRAY], [927, 320, 38, 30], [972, 333, 42, 18], [972, 357, 42, 18], [762, 376, 72, 18]]);
  b.box(525, 450, 51, 45);
  b.rects([[525, 450, 15, 18], [525, 474, 18, 18]], GRAY);
  b.rects([[558, 450, 15, 18], [555, 474, 18, 18]], GOLD);
  b.rect(486, 48, 12, 9);
  b.vias('250,76 301,130 328,130 409,100 466,70 484,91 508,73 685,202 682,232');

  // front side, right end
  b.tile(1150, 500);
  [[39, 37], [99, 36], [156, 38], [216, 38], [276, 36], [333, 38], [393, 36], [453, 36]].forEach(([y, h]) => b.rect(276, y, 12, h));
  [[3, 39], [63, 36], [120, 39], [180, 39], [243, 24], [636, 30], [684, 30], [729, 33], [777, 30], [825, 30]].forEach(([x, w]) => b.rect(x, 502, w, 11));
  b.rects([[621, 363, 12, 30], [621, 408, 9, 33], [621, 456, 9, 30], [861, 366, 12, 33], [861, 414, 12, 33], [861, 462, 12, 30], [651, 336, 33, 12], [699, 336, 30, 9], [747, 336, 30, 9], [819, 345, 33, 12],
    [807, 303, 66, 36], [921, 33, 75, 42], [306, 417, 42, 75], [894, 54, 9, 9]], GRAY);
  b.scatters([[66, 40, 55, 18], [75, 147, 60, 12], [138, 138, 85, 18, 0.9], [255, 39, 14, 72], [234, 178, 36, 55, 0.7], [228, 280, 42, 100, 0.85], [0, 105, 18, 30], [18, 150, 40, 18], [0, 240, 12, 120],
    [0, 357, 36, 12, 0.6], [117, 360, 15, 20, 0.7], [246, 400, 20, 95], [160, 486, 105, 12, 0.7], [79, 459, 45, 30], [0, 472, 30, 20, 0.6], [624, 114, 18, 210, 0.6], [669, 75, 20, 14], [735, 75, 60, 36, 0.8],
    [792, 120, 30, 75], [783, 165, 12, 60, 0.5], [801, 228, 22, 45], [905, 87, 33, 135, 0.8], [750, 405, 105, 65, 0.75], [830, 385, 20, 110, 0.7], [640, 462, 15, 33], [678, 462, 12, 30], [645, 405, 100, 10, 0.7],
    [756, 372, 75, 15, 0.7], [381, 396, 30, 12], [426, 399, 36, 9]]);
  b.bga(20, 90, 50, 60, 0.6, 0);
  b.bga(138, 75, 50, 57, 0.4, 0);
  b.bga(192, 420, 48, 50, 0.1, 0);
  b.bga(198, 378, 54, 30, 0.1, 0);
  b.box(78, 69, 57, 75);
  b.box(198, 60, 53, 69);
  b.box(168, 222, 48, 76);
  b.box(165, 303, 51, 79);
  b.box(66, 382, 46, 75);
  b.rects([[81, 72, 51, 9], [81, 132, 51, 9], [198, 60, 51, 9], [198, 120, 51, 9], [168, 222, 45, 45], [165, 336, 48, 43], [66, 411, 43, 43]], GOLD);
  b.caps([[45, 166, 81, 30, GOLD, GRAY], [138, 178, 45, 18, GOLD, GRAY], [54, 202, 60, 174], [135, 385, 46, 96, GOLD, GRAY],
    [0, 40, 42, 24], [120, 40, 54, 24], [207, 40, 42, 15], [48, 40, 15, 42, GRAY, GOLD], [642, 354, 15, 46], [672, 354, 18, 46], [696, 354, 15, 46], [726, 354, 18, 46], [747, 354, 45, 18], [33, 474, 45, 15], [766, 432, 44, 15],
    [0, 140, 15, 24, GRAY, GRAY], [21, 175, 18, 45], [0, 175, 15, 42]]);
  b.pins(68, 382, 40, 4, 6, 12);
  b.pins(170, 284, 42, 4, 6, 10);
  b.pins(170, 306, 42, 4, 6, 10);
  b.box(234, 145, 36, 36);
  b.pins(237, 148, 30, 4, 6, 9);
  b.pins(237, 168, 30, 4, 6, 9);
  b.box(228, 237, 42, 36);
  b.pins(231, 240, 33, 4, 6, 9);
  b.pins(231, 260, 33, 4, 6, 9);
  b.box(294, 72, 327, 315);
  b.rects([[294, 72, 27, 51], [591, 72, 27, 51], [294, 306, 27, 51], [591, 306, 27, 51]], GRAY);
  [387, 411, 438, 462, 486, 510].forEach((x) => b.rect(x, 174, 17, 27, x === 486 ? GRAY : GOLD));
  b.box(363, 411, 219, 90);
  [405, 444, 483].forEach((x) => b.rects([[x, 414, 7, 15], [x, 480, 7, 18]], GOLD));
  b.rects([[528, 414, 6, 15], [528, 480, 6, 18], [366, 435, 6, 38], [573, 435, 6, 38], [370, 420, 14, 6], [564, 420, 14, 6], [370, 484, 14, 6], [564, 484, 14, 6]], GRAY);
  b.box(651, 127, 123, 197);
  b.pins(654, 147, 160, 14, 10, 6, true);
  b.pins(761, 147, 160, 14, 10, 6, true);
  b.pins(660, 130, 104, 11, 5, 8);
  b.pins(660, 312, 104, 11, 5, 10, false, GRAY);
  b.pads(696, 198, 2, 4, 9, 5, 24, 15);
  b.conn(825, 105, 60, 168, 14);
  b.conn(945, 105, 57, 111, 12);
  b.box(903, 279, 39, 222);
  b.pins(905, 288, 205, 15, 12, 6, true);
  b.pins(926, 288, 205, 15, 12, 6, true);
  b.box(669, 24, 54, 51);
  b.rects([[684, 27, 27, 10], [684, 63, 27, 9], [672, 42, 8, 14], [778, 45, 10, 30], [815, 45, 10, 30], [792, 39, 20, 8]], GRAY);
  b.box(774, 36, 54, 54);
  b.quad(630, 75, 33, 36, 2, 2);
  b.quad(705, 78, 30, 30, 2, 2);
  [132, 156, 180, 204, 228].forEach((y) => {
    b.box(891, y, 18, 18);
    b.via(899, y + 8);
  });
  b.vias('352,406 627,190 627,205 627,222 627,238 790,187 790,205 790,222');
  b.vias('508,400', GRAY);

  // front side, tail
  b.tile(400, 560);
  b.conn(243, 462, 60, 105, 9);
  b.conn(243, 633, 60, 108, 9);
  b.scatters([[305, 465, 18, 36], [222, 495, 20, 90, 0.8], [222, 652, 18, 55], [303, 640, 18, 100, 0.8], [240, 768, 25, 18, 0.7]]);
  b.quad(225, 585, 33, 27, 2, 2);
  b.quad(285, 582, 36, 27, 3, 2);
  [507, 531].forEach((y) => {
    b.box(305, y, 18, 18);
    b.via(313, y + 8);
  });
  b.rects([[231, 750, 9, 9], [228, 792, 9, 12], [249, 792, 9, 12], [228, 814, 9, 12], [249, 814, 9, 12], [276, 817, 30, 12]], GRAY);
  b.box(225, 789, 36, 42);
  b.box(267, 816, 54, 30);

  // back side, left half
  b.tile(740, 310);
  b.vias(`82,52 115,67 142,67 97,133 4,193 1,262 121,193 148,184 268,52 301,49 283,67 319,64 304,82 388,76 247,97 265,133 361,106 391,109 412,109 439,109 478,109 535,109
    340,139 373,139 415,145 445,139 475,142 517,154 286,154 304,169 274,178 322,187 346,178 364,163 400,160 424,169 448,163 367,190 394,196 427,199 448,190 526,196 568,211
    457,214 427,223 403,229 472,241 190,256 226,256 265,262 292,271 232,286 262,286 286,301 307,292 247,310 79,334 100,352 358,343 385,346 346,367 313,376 283,394 349,418
    439,352 433,376 457,382 433,400 466,403 448,415 484,325 193,409 196,448 103,451 79,466 112,475 91,490 151,466 142,487 166,487 469,481 484,499 562,337 607,331 634,298
    646,64 673,55 697,64 658,88 886,49 859,73 868,94 988,70 811,133 913,133 868,175 1030,154 1111,160 979,184 760,193 766,223 952,241 1069,232 1081,256 904,283 859,316
    928,346 1072,349 742,367 748,397 823,364 796,394 826,394 838,424 691,409 646,424`);
  b.vias('325,160 616,58 988,142 886,307 667,424', GRAY);
  b.box(120, 201, 246, 50);
  b.pins(138, 204, 207, 27, 4, 12);
  b.pins(138, 237, 207, 27, 4, 12);
  b.rects([[207, 204, 4, 12], [213, 204, 4, 12], [231, 204, 4, 12], [270, 204, 4, 12]], TEAL);
  b.rects([[121, 207, 8, 12], [121, 231, 8, 9], [354, 207, 10, 12], [357, 231, 7, 9], [108, 427, 24, 8], [112, 423, 17, 6], [210, 466, 11, 17], [214, 462, 7, 24], [639, 114, 3, 12], [669, 162, 12, 3]], GRAY);
  [543, 603].forEach((x) => {
    b.box(x, 243, 54, 51);
    b.rects([[x + 12, 246, 30, 9], [x + 12, 279, 30, 12], [x === 543 ? 545 : 642, 261, 12, 12]], GRAY);
  });
  b.rects([[585, 261, 10, 12], [605, 261, 10, 12]], GOLD);

  // back side, right half
  b.tile(1110, 310);
  b.vias(`40,52 79,67 118,52 142,52 166,52 193,73 286,58 340,49 46,103 88,103 103,139 178,151 217,133 346,85 376,85 376,109 343,136 544,106 577,106 103,232 100,289 169,295 241,301 280,292
    394,289 31,322 25,352 52,355 22,382 112,400 136,409 181,397 148,454 235,475 292,448 310,412 358,409 352,481 736,88 763,88 787,97 700,109 748,109 688,142 766,151 793,148 817,151
    841,109 868,100 886,91 904,76 952,61 940,82 940,109 907,133 949,133 982,142 937,154 955,175 901,190 964,220 958,259 898,256 922,265 922,307 886,328 916,328 907,352 931,361
    895,376 931,385 913,400 865,421 889,421 745,334 712,346 724,367 751,382 1051,307 1015,322 1090,337 1000,364 1030,379 1009,388 1087,367 1093,394 1006,418 1045,421 1075,421 1063,448`);
  b.vias('130,166 109,178 262,196 157,394 295,394 331,406 319,478 724,106 910,52 979,85 817,289 910,283 1003,301', GRAY);
  b.rects([[351, 31, 24, 8], [355, 27, 17, 6]], GRAY);
  [810, 865].forEach((x) => {
    b.box(x, 201, 55, 50);
    b.rects([[x + 12, 203, 30, 7], [x + 12, 237, 30, 11], [x === 810 ? 812 : 907, 219, 10, 12]], GRAY);
  });
  b.rects([[849, 219, 12, 12], [866, 219, 10, 12]], GOLD);

  // lone vias on the narrow part
  b.tile(0, 0);
  [[512, 332], [633, 375], [713, 354], [721, 354], [676, 382], [684, 386], [690, 380], [699, 387], [687, 390]].forEach(([x, y]) => b.via(x * 3, y * 3));
  b.via(1425, 522, GRAY);
  b.rects([[1554, 984, 12, 15], [1557, 978, 9, 27]], GRAY);
  return b.render();
}

const MARKS = [[674, 306], [1124, 306], [674, 706], [1124, 706]]
  .map(([x, y]) => `<text transform="translate(${x} ${y}) rotate(-45)">XZZ@XZZHK</text>`).join('');

component('pcb-view', `
  :host { display: block; flex: 1; min-height: 0; overflow: hidden; background: #fff; }
  svg { display: block; width: 100%; height: 100%; }
  .mark { font: 17px "Open Sans", sans-serif; fill: #c8c4b8; }
  .over { opacity: 0.16; }
`, `
  <svg viewBox="441 132 1072 706" preserveAspectRatio="xMinYMin slice" role="img" aria-label="Board view">
    <g class="mark">${MARKS}</g>
    <g fill="${GREEN}" stroke="#80b39a">
      <path d="M472 141h30q4 0 4 4v171q0 5 5 5h286l6-3h665q5 0 5 6v79q0 5 5 7 5 2 5 7v61q0 5-5 5h-38l-3 3h-60l-7-5-9-11-2-1h-63l-6 6-5 7-10 4H762q-7 0-7-7v-17q0-6-6-6H474q-5 0-5-5v-95q0-5 5-10l8-5q4-3 4-9v-36q0-5-5-9l-8-6q-5-5-5-13V146q0-5 4-5z"/>
      <path d="M759 509h526l6 5 5 7h68l2-5 7-7h110q4 0 4 4v60q0 6-5 7-6 2-6 7v81q0 5-5 5H805l-3-2H516q-6 0-6 6v170h-38V721q0-5 5-10l12-12q1-2 1-8v-33q0-5-5-8l-9-6q-3-3-3-8v-95q0-6 6-6h273q6 0 6-6z"/>
    </g>
    <g shape-rendering="crispEdges">${drawParts()}</g>
    <g fill="${GRAY}">
      <circle cx="495" cy="170" r="5"/><circle cx="1430" cy="475" r="5"/>
      <ellipse cx="1252" cy="366" rx="5" ry="4"/><ellipse cx="1264" cy="369" rx="6" ry="5"/>
      <ellipse cx="1334" cy="369" rx="6" ry="5"/><circle cx="1344" cy="365" r="4"/>
      <circle cx="1434" cy="513" r="5"/><ellipse cx="1267" cy="622" rx="6" ry="5"/><ellipse cx="1337" cy="622" rx="6" ry="5"/>
      <circle cx="498" cy="820" r="5"/>
      <path d="M668 623l7-7 3 2-8 8z"/>
    </g>
    <g fill="${TEAL}"><circle cx="1255" cy="624" r="5"/><circle cx="1347" cy="623" r="4"/></g>
    <g stroke="${OUTLINE}" fill="none"><path d="M605 582l8 6-4 5-8-6z"/></g>
    <path d="M603 587l3 3M607 583l4 4M619 617l9-7M623 622l8-8M628 623l6-6" stroke="${GOLD}" stroke-width="2" stroke-dasharray="2 1"/>
    <text x="524" y="407" font-size="7" fill="#f0e49a">820-3243</text>
    <g class="mark over">${MARKS}</g>
  </svg>
`);

component('xzz-app', `
  :host { display: flex; flex-direction: column; height: 100vh; }
  main { display: flex; flex: 1; min-height: 0; }
  .left { display: flex; flex-direction: column; width: 430px; flex: none; }
  .browse { display: flex; flex: 1; min-height: 0; }
  .work { display: flex; flex: 1; flex-direction: column; min-width: 0; }
  .view { display: flex; flex: 1; min-height: 0; }
  .canvas { display: flex; flex: 1; flex-direction: column; min-width: 0; }
  side-handle { width: 11px; padding-top: 336px; }
  .right { width: 10px; padding-top: 326px; border-right-width: 0; background: #fafafa; }
`, `
  <title-bar></title-bar>
  <menu-bar></menu-bar>
  <main>
    <div class="left">
      <search-bar></search-bar>
      <div class="browse"><nav-rail></nav-rail><file-tree></file-tree></div>
    </div>
    <side-handle></side-handle>
    <div class="work">
      <tab-bar></tab-bar>
      <div class="view">
        <div class="canvas"><tool-bar></tool-bar><pcb-view></pcb-view></div>
        <side-handle class="right" right></side-handle>
      </div>
    </div>
  </main>
  <status-bar></status-bar>
`);
</script>
</body>
</html>
